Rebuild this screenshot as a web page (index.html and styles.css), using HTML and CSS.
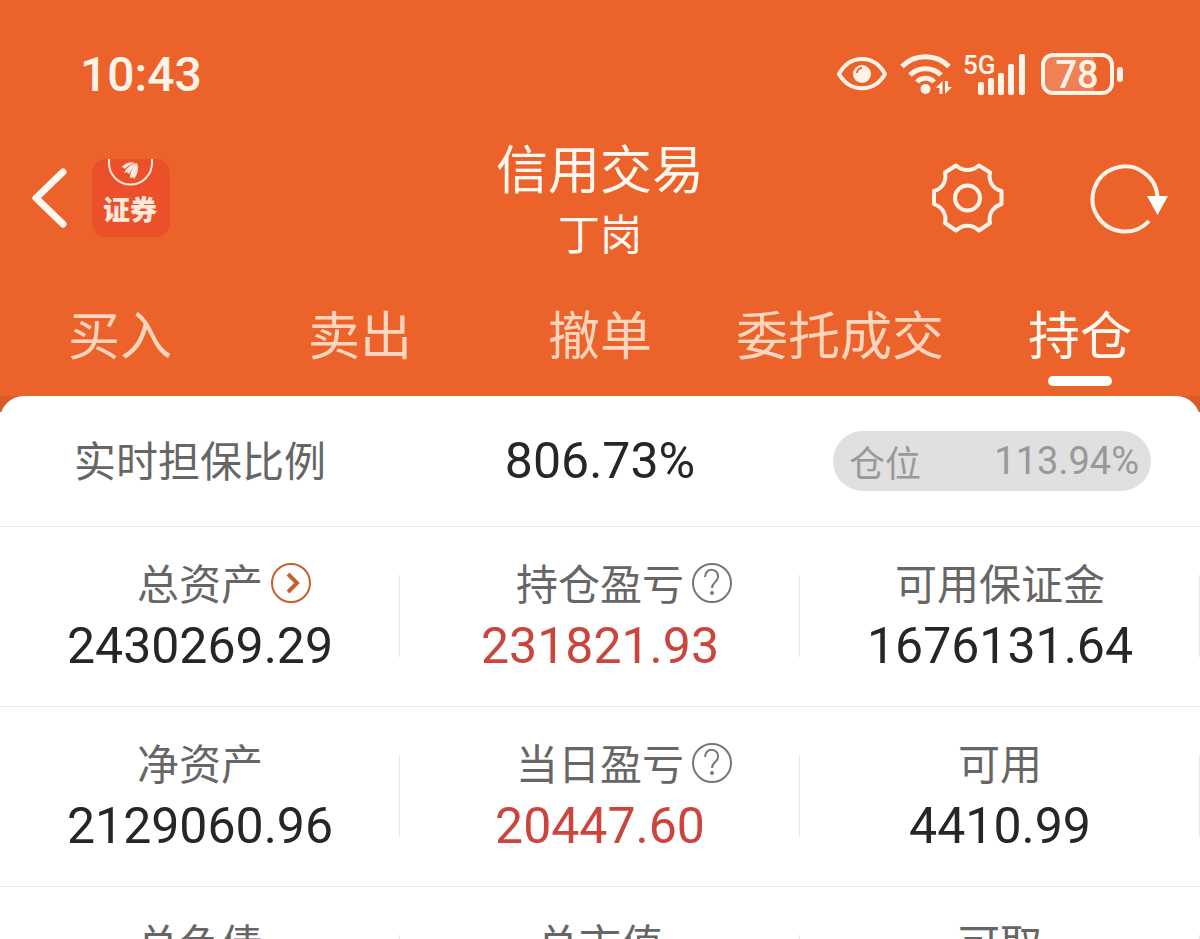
FILE: index.html
```html
<!DOCTYPE html>
<html lang="zh-CN">
<head>
  <meta charset="UTF-8">
  <title>信用交易</title>
  <meta name="viewport" content="width=device-width, initial-scale=1.0">
  <link rel="stylesheet" href="styles.css">
</head>
<body>
  <header class="header">
    <div class="status-bar">
      <span class="time">10:43</span>
      <div class="status-icons">
        <svg width="50" height="42" viewBox="0 0 50 42" fill="none" stroke="#fff3e8" stroke-width="4">
          <path d="M2 21C13 1 37 1 48 21C37 40 13 40 2 21Z" stroke-linejoin="round"/>
          <circle cx="25" cy="21" r="9" fill="#fff3e8" stroke="none"/>
          <path d="M20 20a5 5 0 0 1 5-5" stroke="#ec622b" stroke-width="2"/>
        </svg>
        <svg width="52" height="42" viewBox="0 0 52 42" fill="none" stroke="#fff3e8" stroke-width="5">
          <path d="M2 13.500C15 .5 36 .5 49 13.500"/>
          <path d="M10 22C18 13.500 33 13.500 41 22"/>
          <path d="M17 29C21 24 30 24 34 29" />
          <circle cx="25.500" cy="36" r="5" fill="#fff3e8" stroke="none"/>
          <path d="M42.500 28v13h-3v-6h-4zM45 41V28h3v6h4z" fill="#fff3e8" stroke="none"/>
        </svg>
        <svg class="signal" width="63" height="42" viewBox="0 0 63 42" fill="#fff3e8">
          <text x="-2" y="21" class="network">5G</text>
          <rect x="13" y="29" width="6" height="13" rx="2"/>
          <rect x="23" y="25" width="6" height="17" rx="2"/>
          <rect x="33" y="20" width="6" height="22" rx="2"/>
          <rect x="43" y="11" width="6" height="31" rx="2"/>
          <rect x="54" y="1" width="6" height="41" rx="2"/>
        </svg>
        <svg width="83" height="42" viewBox="0 0 83 42" fill="#fff3e8">
          <path d="M12 4H53V38H12a8 8 0 0 1-8-8V12a8 8 0 0 1 8-8z" opacity=".22"/>
          <rect x="2" y="2" width="69" height="38" rx="10" fill="none" stroke="#fff3e8" stroke-width="4"/>
          <rect x="76" y="14" width="6" height="15" rx="3"/>
          <text x="36" y="35" text-anchor="middle" class="battery">78</text>
        </svg>
      </div>
    </div>

    <div class="nav-bar">
      <div class="nav-left">
        <button type="button" class="icon-btn" aria-label="返回">
          <svg width="36" height="60" viewBox="0 0 36 60" fill="none" stroke="#fff8f0" stroke-width="7" stroke-linecap="round" stroke-linejoin="round">
            <path d="M31 4L4 30L31 56"/>
          </svg>
        </button>
        <svg class="logo" width="78" height="78" viewBox="0 0 78 78">
          <rect width="78" height="78" rx="14" fill="#ec502a"/>
          <path d="M17 0v4a21.500 21.500 0 0 0 43 0v-4" fill="none" stroke="#ffe9dc" stroke-width="2"/>
          <path d="M29 9C33 4 38 2 43 4C38 5 35 8 33 10C31 8 30 8 29 9Z" fill="#ffe9dc"/>
          <path d="M32 14C35 8 40 5 44 4C41 8 39 12 37 15C35 13 34 13 32 14Z" fill="#ffe9dc"/>
          <path d="M38 19C38 13 41 7 45 4C47 9 46 15 42 20C41 18 40 18 38 19Z" fill="#ffe9dc"/>
          <text x="38" y="61" text-anchor="middle" class="logo-text">证券</text>
        </svg>
      </div>
      <div class="nav-title">
        <h1>信用交易</h1>
        <p>丁岗</p>
      </div>
      <div class="nav-right">
        <button type="button" class="icon-btn" aria-label="设置">
          <svg width="72" height="72" viewBox="0 0 72 72" fill="none" stroke="#fff3e8" stroke-width="4" stroke-linejoin="round">
            <path d="M24 3.500C31 9.500 40 9.500 47 3.500L58 10.500C56 19 61 27 69.500 29V42C61 45 56 52 58 61L47 68.500C40 62 31 62 24 68.500L13 61C15 52 10 45 2 42V29C10 27 15 19 13 10.500Z"/>
            <circle cx="35.500" cy="36" r="12.500"/>
          </svg>
        </button>
        <button type="button" class="icon-btn" aria-label="刷新">
          <svg width="78" height="72" viewBox="0 0 78 72" fill="none" stroke="#fff3e8" stroke-width="4">
            <path d="M67.500 35A32.500 32.500 0 1 0 59 59"/>
            <path d="M57 34H78L67.500 53Z" fill="#fff" stroke="none"/>
          </svg>
        </button>
      </div>
    </div>

    <nav class="tabs">
      <a href="#">买入</a>
      <a href="#">卖出</a>
      <a href="#">撤单</a>
      <a href="#">委托成交</a>
      <a href="#" class="active">持仓</a>
    </nav>
  </header>

  <main class="content">
    <div class="card">
      <section class="ratio-row">
        <span class="label">实时担保比例</span>
        <span class="value">806.73%</span>
        <div class="position">
          <span>仓位</span>
          <span class="percent">113.94%</span>
        </div>
      </section>

      <section class="row">
        <div class="cell">
          <div class="label">总资产
            <button type="button" class="hint" aria-label="总资产详情">
              <svg width="42" height="42" viewBox="0 0 42 42" fill="none" stroke="#c4622f">
                <circle cx="21" cy="21" r="19" stroke-width="2"/>
                <path d="M18 12L27 21L18 30" stroke-width="4"/>
              </svg>
            </button>
          </div>
          <div class="value">2430269.29</div>
        </div>
        <div class="cell">
          <div class="label">持仓盈亏
            <button type="button" class="hint" aria-label="持仓盈亏说明">
              <svg width="42" height="42" viewBox="0 0 42 42" fill="none" stroke="#777" stroke-width="2">
                <circle cx="21" cy="21" r="19"/>
                <path d="M14 15C14 5 28 6 27 15C27 20 21 20 21 26"/>
                <circle cx="21" cy="31" r="2" fill="#777" stroke="none"/>
              </svg>
            </button>
          </div>
          <div class="value red">231821.93</div>
        </div>
        <div class="cell">
          <div class="label">可用保证金</div>
          <div class="value">1676131.64</div>
        </div>
      </section>

      <section class="row">
        <div class="cell">
          <div class="label">净资产</div>
          <div class="value">2129060.96</div>
        </div>
        <div class="cell">
          <div class="label">当日盈亏
            <button type="button" class="hint" aria-label="当日盈亏说明">
              <svg width="42" height="42" viewBox="0 0 42 42" fill="none" stroke="#777" stroke-width="2">
                <circle cx="21" cy="21" r="19"/>
                <path d="M14 15C14 5 28 6 27 15C27 20 21 20 21 26"/>
                <circle cx="21" cy="31" r="2" fill="#777" stroke="none"/>
              </svg>
            </button>
          </div>
          <div class="value red">20447.60</div>
        </div>
        <div class="cell">
          <div class="label">可用</div>
          <div class="value">4410.99</div>
        </div>
      </section>

      <section class="row">
        <div class="cell">
          <div class="label">总负债</div>
        </div>
        <div class="cell">
          <div class="label">总市值</div>
        </div>
        <div class="cell">
          <div class="label">可取</div>
        </div>
      </section>
    </div>
  </main>
</body>
</html>
```

FILE: styles.css
```css
* {
  box-sizing: border-box;
}
body {
  margin: 0;
  height: 100vh;
  overflow: hidden;
  background: #fff;
  font-family: Roboto, "Noto Sans CJK SC", sans-serif;
  color: #262626;
}
h1, p {
  margin: 0;
  font-weight: 400;
}
button {
  padding: 0;
  border: none;
  background: none;
  cursor: pointer;
}
svg {
  display: block;
}

/* header */
.header {
  background: #ec622b;
  color: #fff8f0;
}
.status-bar {
  display: flex;
  justify-content: space-between;
  align-items: center;
  height: 128px;
  padding: 20px 76px 0 80px;
}
.time {
  font-size: 48px;
  font-weight: 500;
  color: #fff3e8;
}
.status-icons {
  display: flex;
  gap: 13px;
}
.signal {
  overflow: visible;
}
.network {
  font-size: 26px;
  font-weight: 500;
}
.battery {
  font-size: 38px;
  font-weight: 500;
}
.nav-bar {
  display: grid;
  grid-template-columns: 1fr auto 1fr;
  align-items: center;
  height: 140px;
  padding: 0 32px;
}
.nav-left {
  display: flex;
  align-items: center;
  gap: 24px;
}
.nav-right {
  display: flex;
  justify-content: flex-end;
  gap: 86px;
}
.logo-text {
  font-size: 27px;
  font-weight: 900;
  fill: #ffe9dc;
}
.nav-title {
  padding-top: 4px;
  text-align: center;
}
.nav-title h1 {
  font-size: 52px;
  line-height: 72px;
}
.nav-title p {
  font-size: 42px;
  line-height: 56px;
}
.tabs {
  display: grid;
  grid-template-columns: repeat(5, 1fr);
  height: 128px;
  padding-top: 34px;
}
.tabs a {
  position: relative;
  color: #ffd6bd;
  font-size: 52px;
  line-height: 72px;
  text-align: center;
  text-decoration: none;
}
.tabs .active {
  color: #fff8f0;
}
.tabs .active::after {
  content: "";
  position: absolute;
  left: 50%;
  bottom: 10px;
  width: 64px;
  height: 10px;
  margin-left: -32px;
  border-radius: 5px;
  background: #fff;
}

/* content */
.content {
  background: linear-gradient(#d75d28 16px, #fff 16px);
}
.card {
  background: #fff;
  border-radius: 24px 24px 0 0;
}
.label {
  color: #666;
  font-size: 42px;
  line-height: 60px;
}
.value {
  font-size: 50px;
  line-height: 64px;
}
.red {
  color: #cb453d;
}
.ratio-row {
  display: grid;
  grid-template-columns: 1fr auto 1fr;
  align-items: center;
  height: 131px;
  padding: 0 49px;
  border-bottom: 1px solid #ebebeb;
}
.ratio-row .label {
  padding: 4px 0 0 25px;
}
.position {
  display: flex;
  justify-content: space-between;
  align-items: center;
  justify-self: end;
  width: 318px;
  height: 60px;
  padding: 0 12px 0 16px;
  border-radius: 30px;
  background: #e0e0e0;
  color: #999;
  font-size: 36px;
}
.percent {
  font-size: 38px;
}
.row {
  display: grid;
  grid-template-columns: repeat(3, 1fr);
  height: 180px;
  border-bottom: 1px solid #ebebeb;
}
.cell {
  position: relative;
  padding-top: 29px;
  text-align: center;
}
.cell::after {
  content: "";
  position: absolute;
  top: 48px;
  right: 0;
  width: 1px;
  height: 82px;
  background: #e6e6e6;
}
.cell .label {
  position: relative;
  width: fit-content;
  margin: 0 auto;
}
.cell .value {
  line-height: 60px;
}
.hint {
  position: absolute;
  top: 6px;
  left: 100%;
  margin-left: 7px;
}
```
